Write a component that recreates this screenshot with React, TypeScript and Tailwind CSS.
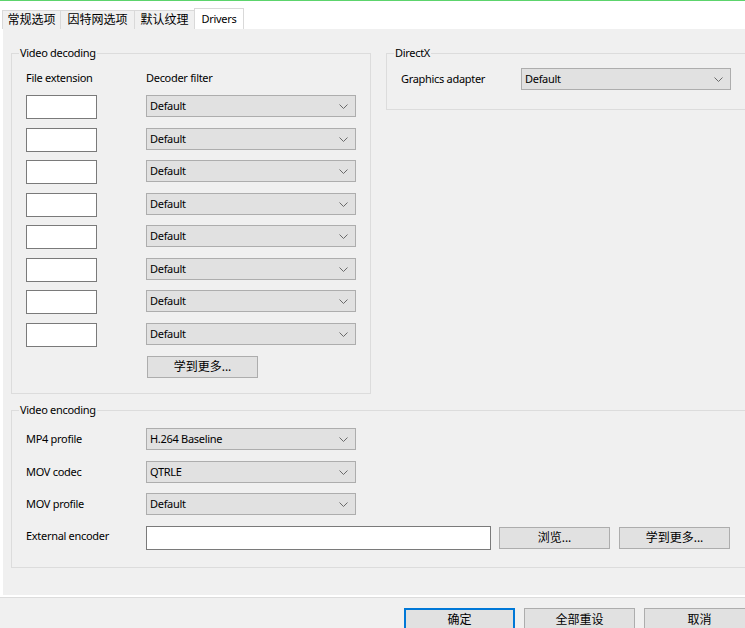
import React from "react";

const FONT = { fontFamily: '"Noto Sans", "Noto Sans CJK SC", sans-serif' };

function Chevron() {
  return (
    <svg width="9" height="5" viewBox="0 0 9 5" className="shrink-0">
      <path d="M0.5 0.5 L4.5 4.5 L8.5 0.5" fill="none" stroke="#6a6a6a" strokeWidth="1" />
    </svg>
  );
}

function Select({ value, w = "w-[210px]" }: { value: string; w?: string }) {
  return (
    <div
      className={`${w} h-[22px] shrink-0 bg-[#e1e1e1] border border-[#adadad] flex items-center justify-between pl-[3px] pr-[7px] text-[11px] text-black`}
    >
      <span className="leading-[14px]">{value}</span>
      <Chevron />
    </div>
  );
}

function TextBox({ w }: { w: string }) {
  return <div className={`${w} h-[24px] shrink-0 bg-white border border-[#7a7a7a]`} />;
}

function Btn({ label, cls = "" }: { label: string; cls?: string }) {
  return (
    <div
      className={`w-[111px] h-[22px] shrink-0 bg-[#e1e1e1] border border-[#adadad] flex items-center justify-center text-[12px] leading-[14px] tracking-normal text-black ${cls}`}
    >
      {label}
    </div>
  );
}

export default function App() {
  const rowGaps = ["mt-0", "mt-[9px]", "mt-[8px]", "mt-[9px]", "mt-[8px]", "mt-[9px]", "mt-[8px]", "mt-[9px]"];
  return (
    <div className="w-[745px] h-[628px] overflow-hidden bg-white text-black tracking-[-0.3px]" style={FONT}>
      <div className="h-px bg-[#5cd46c]" />
      <div className="h-[28px] flex items-end pl-[2px]">
        <div className="w-[59px] h-[19px] bg-[#f0f0f0] border border-b-0 border-[#d9d9d9] flex items-center justify-center text-[12px] leading-[14px] tracking-normal">
          常规选项
        </div>
        <div className="w-[75px] h-[19px] -ml-px bg-[#f0f0f0] border border-b-0 border-[#d9d9d9] flex items-center justify-center text-[12px] leading-[14px] tracking-normal">
          因特网选项
        </div>
        <div className="w-[61px] h-[19px] -ml-px bg-[#f0f0f0] border border-b-0 border-[#d9d9d9] flex items-center justify-center text-[12px] leading-[14px] tracking-normal">
          默认纹理
        </div>
        <div className="w-[50px] h-[21px] -ml-px bg-white border border-b-0 border-[#d9d9d9] flex items-center justify-center text-[11px] leading-[14px]">
          Drivers
        </div>
      </div>
      <div className="ml-[3px] h-[566px] bg-[#f0f0f0] pt-[17px] overflow-hidden">
        <div className="flex items-start">
          <fieldset className="ml-[8px] w-[360px] h-[348px] shrink-0 border border-[#dcdcdc]">
            <legend className="ml-[7px] px-px text-[11px] leading-[14px]">Video decoding</legend>
            <div className="pl-[14px] pt-[11px]">
              <div className="flex h-[14px] text-[11px] leading-[14px]">
                <span className="w-[120px]">File extension</span>
                <span>Decoder filter</span>
              </div>
              <div className="mt-[10px] flex flex-col">
                {rowGaps.map((g, i) => (
                  <div key={i} className={`flex items-start ${g}`}>
                    <TextBox w="w-[71px]" />
                    <div className="ml-[49px]">
                      <Select value="Default" />
                    </div>
                  </div>
                ))}
              </div>
              <div className="mt-[9px] ml-[121px]">
                <Btn label="学到更多..." />
              </div>
            </div>
          </fieldset>
          <fieldset className="ml-[15px] w-[370px] h-[64px] shrink-0 border border-[#dcdcdc]">
            <legend className="ml-[7px] px-px text-[11px] leading-[14px]">DirectX</legend>
            <div className="pl-[14px] pt-[8px] flex items-center">
              <span className="w-[120px] text-[11px] leading-[14px]">Graphics adapter</span>
              <Select value="Default" />
            </div>
          </fieldset>
        </div>
        <fieldset className="mt-[9px] ml-[8px] w-[760px] h-[165px] border border-[#dcdcdc]">
          <legend className="ml-[7px] px-px text-[11px] leading-[14px]">Video encoding</legend>
          <div className="pl-[14px] pt-[11px] flex flex-col">
            <div className="flex items-center">
              <span className="w-[120px] text-[11px] leading-[14px]">MP4 profile</span>
              <Select value="H.264 Baseline" />
            </div>
            <div className="flex items-center mt-[11px]">
              <span className="w-[120px] text-[11px] leading-[14px]">MOV codec</span>
              <Select value="QTRLE" />
            </div>
            <div className="flex items-center mt-[10px]">
              <span className="w-[120px] text-[11px] leading-[14px]">MOV profile</span>
              <Select value="Default" />
            </div>
            <div className="flex items-start mt-[11px]">
              <span className="w-[120px] pt-[3px] text-[11px] leading-[14px]">External encoder</span>
              <TextBox w="w-[345px]" />
              <Btn label="浏览..." cls="ml-[8px] mt-px" />
              <Btn label="学到更多..." cls="ml-[9px] mt-px" />
            </div>
          </div>
        </fieldset>
      </div>
      <div className="h-[2px] bg-white" />
      <div className="h-px bg-[#dcdcdc]" />
      <div className="h-[40px] bg-[#f0f0f0] pt-[10px] flex pl-[404px] gap-[9px] tracking-normal">
        <div className="w-[111px] h-[23px] shrink-0 bg-[#e1e1e1] border-2 border-[#0078d7] flex items-center justify-center text-[12px] leading-[14px]">
          确定
        </div>
        <div className="w-[111px] h-[23px] shrink-0 bg-[#e1e1e1] border border-[#adadad] flex items-center justify-center text-[12px] leading-[14px]">
          全部重设
        </div>
        <div className="w-[111px] h-[23px] shrink-0 bg-[#e1e1e1] border border-[#adadad] flex items-center justify-center text-[12px] leading-[14px]">
          取消
        </div>
      </div>
    </div>
  );
}
